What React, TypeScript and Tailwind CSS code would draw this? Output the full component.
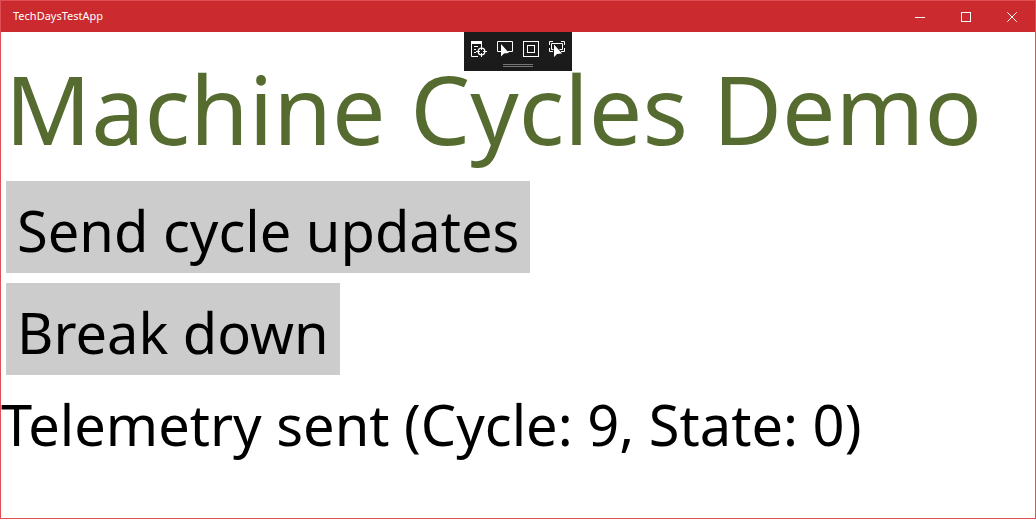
import type { ReactNode } from "react";

function CaptionButton({ label, children }: { label: string; children: ReactNode }) {
  return (
    <button aria-label={label} className="flex w-[46px] items-center justify-center hover:bg-white/20">
      <svg width="10" height="10" viewBox="0 0 10 10" fill="none" stroke="currentColor">
        {children}
      </svg>
    </button>
  );
}

function ToolButton({ label, children }: { label: string; children: ReactNode }) {
  return (
    <button aria-label={label} className="flex size-[26px] items-center justify-center hover:bg-white/20">
      <svg width="18" height="18" viewBox="0 0 18 18" fill="none" stroke="currentColor">
        {children}
      </svg>
    </button>
  );
}

function DebugToolbar() {
  return (
    <div className="absolute top-[31px] left-1/2 flex h-[39px] w-[108px] -translate-x-1/2 flex-col items-center bg-[#1b1b1b] pt-1 text-white">
      <div className="flex">
        <ToolButton label="Go to Live Visual Tree">
          <path d="M1 2.5h11" strokeWidth="3" />
          <path d="M1.5 4v12.5H8M11.5 4v2M4 6.5h4M4 9.5h2M4 12.5h2" />
          <circle cx="11.5" cy="11.5" r="3.3" strokeWidth="1.3" />
          <path d="M11.5 6v4M11.5 13v4M6 11.5h4M13 11.5h4" />
        </ToolButton>
        <ToolButton label="Enable Selection">
          <path d="M5 11.5H1.5v-10h15v10h-5" />
          <path d="M5 4v12.5l3-3 5-.5z" fill="currentColor" stroke="none" />
        </ToolButton>
        <ToolButton label="Display Layout Adorners">
          <rect x="1.5" y="1.5" width="15" height="15" />
          <rect x="5.5" y="5.5" width="7" height="7" />
        </ToolButton>
        <ToolButton label="Track Focused Element">
          <path d="M1.5 5V1.5H5M13 1.5h3.5V5M1.5 8v3.5H5M16.5 8v3.5H13M5.5 9.5h-2v-6h11v6h-3" />
          <path d="M6 4.5V17l3-3 5-.5z" fill="currentColor" stroke="none" />
        </ToolButton>
      </div>
      <div className="mt-[2px] h-[3px] w-[30px] border-y border-[#777]" />
    </div>
  );
}

export default function App() {
  return (
    <div className="relative flex min-h-screen flex-col border border-[#e04f56] bg-white font-['Noto_Sans',sans-serif] text-black">
      <header className="flex h-[31px] justify-between bg-[#cb2a2e] text-white">
        <span className="self-center pl-3 text-[11px]">TechDaysTestApp</span>
        <div className="flex">
          <CaptionButton label="Minimize">
            <path d="M0 5.5h10" />
          </CaptionButton>
          <CaptionButton label="Maximize">
            <rect x="0.5" y="0.5" width="9" height="9" />
          </CaptionButton>
          <CaptionButton label="Close">
            <path d="M0.3 0.3l9.4 9.4M9.7 0.3l-9.4 9.4" />
          </CaptionButton>
        </div>
      </header>
      <DebugToolbar />
      <main className="flex flex-col items-start">
        <h1 className="pt-1 pl-1 text-[95px] leading-[145px] whitespace-nowrap text-[#556b2f]">Machine Cycles Demo</h1>
        <div className="flex flex-col items-start gap-[10px] px-[5px] text-[56px] leading-[86px] whitespace-nowrap">
          <button className="bg-[#ccc] px-[11px] pt-[6px]">Send cycle updates</button>
          <button className="bg-[#ccc] px-[11px] pt-[6px]">Break down</button>
        </div>
        <p className="pt-[6px] text-[56px] leading-[86px] whitespace-nowrap">Telemetry sent (Cycle: 9, State: 0)</p>
      </main>
    </div>
  );
}
